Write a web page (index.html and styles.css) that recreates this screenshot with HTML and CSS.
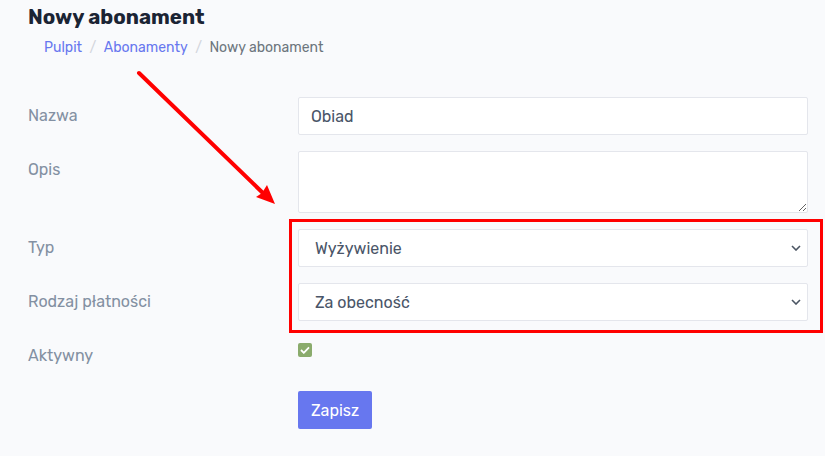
FILE: index.html
```html
<!DOCTYPE html>
<html lang="pl">
<head>
<meta charset="utf-8">
<title>Nowy abonament</title>
<link rel="stylesheet" href="styles.css">
</head>
<body>
<div class="page">
  <h1 class="title">Nowy abonament</h1>
  <nav class="crumbs">
    <a href="#">Pulpit</a><span class="sep">/</span><a href="#">Abonamenty</a><span class="sep">/</span><span class="current">Nowy abonament</span>
  </nav>
  <form class="form">
    <label class="lbl">Nazwa</label>
    <div class="ctl"><input class="input" type="text" value="Obiad"></div>
    <label class="lbl">Opis</label>
    <div class="ctl"><textarea class="input area"></textarea></div>
    <label class="lbl">Typ</label>
    <div class="ctl"><div class="select"><span>Wyżywienie</span><svg class="chev" width="10" height="6" viewBox="0 0 10 6"><path d="M1 1l4 4 4-4" fill="none" stroke="#4b5563" stroke-width="1.6"/></svg></div></div>
    <label class="lbl">Rodzaj płatności</label>
    <div class="ctl"><div class="select"><span>Za obecność</span><svg class="chev" width="10" height="6" viewBox="0 0 10 6"><path d="M1 1l4 4 4-4" fill="none" stroke="#4b5563" stroke-width="1.6"/></svg></div></div>
    <label class="lbl">Aktywny</label>
    <div class="ctl"><span class="check"><svg width="10" height="8" viewBox="0 0 10 8"><path d="M1 4l2.8 2.8L9 1.3" fill="none" stroke="#fff" stroke-width="1.8"/></svg></span></div>
    <span></span>
    <div class="ctl actions"><button class="btn" type="button">Zapisz</button></div>
  </form>
  <div class="highlight"></div>
  <svg class="arrow" width="150" height="150" viewBox="0 0 150 150">
    <line x1="11" y1="5" x2="138" y2="128" stroke="#ff0000" stroke-width="4" stroke-linecap="round"/>
    <polygon points="147,136 139,117 134,125 128,129" fill="#ff0000"/>
  </svg>
</div>
</body>
</html>
```
FILE: styles.css
```css
* { box-sizing: border-box; }
html, body { margin: 0; padding: 0; }
body {
  background: #f9fafc;
  font-family: "Rubik", "Inter", "Liberation Sans", sans-serif;
  color: #34395e;
}
.page {
  position: relative;
  width: 825px;
  height: 456px;
  padding: 5px 17px 0 28px;
}
.title {
  margin: 0;
  font-size: 20.5px;
  line-height: 24px;
  font-weight: 700;
  color: #1b2434;
}
.crumbs {
  margin-top: 10px;
  padding-left: 16px;
  font-size: 14px;
  line-height: 18px;
  color: #6c757d;
}
.crumbs a { color: #6777ef; text-decoration: none; }
.crumbs .sep { color: #d3d6dc; padding: 0 7.5px; }
.form {
  display: grid;
  grid-template-columns: 270px 510px;
  row-gap: 16px;
  margin-top: 40px;
}
.lbl {
  font-size: 16px;
  line-height: 22px;
  padding-top: 8px;
  color: #8390a2;
}
.input {
  display: block;
  width: 100%;
  height: 38px;
  border: 1px solid #e4e6ec;
  border-radius: 2px;
  background: #fff;
  font: inherit;
  font-size: 16px;
  color: #4a5568;
  padding: 0 12px;
  outline: none;
}
.area { height: 62px; resize: vertical; }
.select {
  display: flex;
  align-items: center;
  justify-content: space-between;
  height: 38px;
  border: 1px solid #e4e6ec;
  border-radius: 2px;
  background: #fff;
  padding: 0 6px 0 16px;
  font-size: 16px;
  color: #4a5568;
}
.chev { display: block; }
.check {
  display: flex;
  align-items: center;
  justify-content: center;
  width: 14px;
  height: 14px;
  margin-top: 6px;
  border-radius: 2px;
  background: #8aab6c;
}
.actions { padding-top: 8px; }
.btn {
  height: 38px;
  padding: 0 13px;
  border: 0;
  border-radius: 2px;
  background: #6777ef;
  color: #fff;
  font: inherit;
  font-size: 16px;
}
.highlight {
  position: absolute;
  left: 289px;
  top: 219px;
  width: 534px;
  height: 114px;
  border: 3px solid #ff0000;
}
.arrow {
  position: absolute;
  left: 128px;
  top: 68px;
}
```
